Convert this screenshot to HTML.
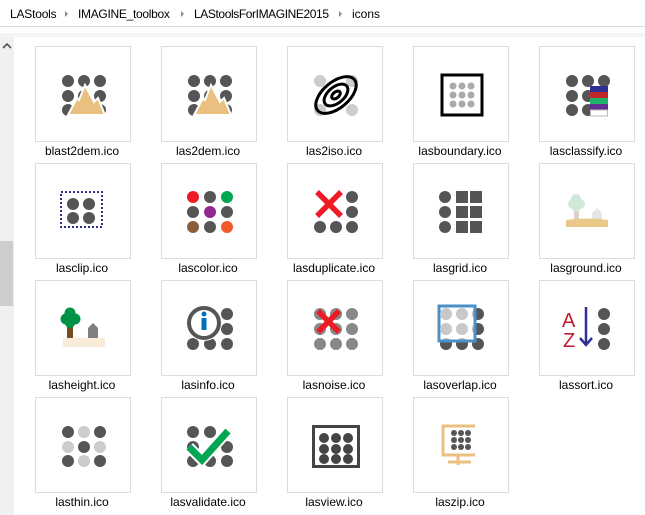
<!DOCTYPE html>
<html><head><meta charset="utf-8"><style>
body{margin:0;width:645px;height:515px;overflow:hidden;background:#fff;font-family:"Liberation Sans",sans-serif;position:relative}
.bc{position:absolute;left:0;top:0;width:645px;height:26px;border-bottom:1px solid #d9d9d9;font-size:12px;color:#000}
.bc span{position:absolute;top:7px;white-space:nowrap}
.bc i{position:absolute;top:11px;width:0;height:0;border-left:3px solid #888;border-top:3px solid transparent;border-bottom:3px solid transparent;z-index:2}
.strip{position:absolute;left:0;top:33px;width:645px;height:4px;background:#f4f4f4}
.sb{position:absolute;left:0;top:37px;width:14px;height:478px;background:#f0f0f0}
.thumb{position:absolute;left:0;top:204px;width:13px;height:65px;background:#cdcdcd}
.t{position:absolute;width:94px;height:94px;border:1px solid #dcdcdc}
.t svg{position:absolute;left:0;top:0}
.l{position:absolute;width:126px;text-align:center;font-size:12px;color:#000}
</style></head><body>
<div class="bc">
<span style="left:10px;letter-spacing:-0.2px">LAStools</span><i style="left:65px"></i>
<span style="left:78px;letter-spacing:-0.3px">IMAGINE_toolbox</span><i style="left:181px"></i>
<span style="left:194px;letter-spacing:-0.4px">LAStoolsForIMAGINE2015</span><i style="left:339px"></i>
<span style="left:352px">icons</span>
</div>
<div class="strip"></div>
<div class="sb"><svg width="14" height="14" style="position:absolute;top:3px;left:0"><path d="M3 8 L7 4 L11 8" stroke="#555" stroke-width="1.6" fill="none"/></svg><div class="thumb"></div></div>

<!-- Row 1 -->
<div class="t" style="left:35px;top:46px"><svg width="96" height="96">
<g fill="#555"><circle cx="32" cy="34" r="6"/><circle cx="48" cy="34" r="6"/><circle cx="64" cy="34" r="6"/><circle cx="32" cy="49" r="6"/><circle cx="48" cy="49" r="6"/><circle cx="64" cy="49" r="6"/><circle cx="32" cy="63" r="6"/><circle cx="48" cy="63" r="6"/><circle cx="64" cy="63" r="6"/></g>
<polygon points="32,68 41,51 43,53 49,38 58,55 62,51 69,68" fill="#e9c07f" stroke="#fff" stroke-width="2"/></svg></div>
<div class="l" style="left:19px;top:144px">blast2dem.ico</div>

<div class="t" style="left:161px;top:46px"><svg width="96" height="96">
<g fill="#555"><circle cx="32" cy="34" r="6"/><circle cx="48" cy="34" r="6"/><circle cx="64" cy="34" r="6"/><circle cx="32" cy="49" r="6"/><circle cx="48" cy="49" r="6"/><circle cx="64" cy="49" r="6"/><circle cx="32" cy="63" r="6"/><circle cx="48" cy="63" r="6"/><circle cx="64" cy="63" r="6"/></g>
<polygon points="32,68 41,51 43,53 49,38 58,55 62,51 69,68" fill="#e9c07f" stroke="#fff" stroke-width="2"/></svg></div>
<div class="l" style="left:145px;top:144px">las2dem.ico</div>

<div class="t" style="left:287px;top:46px"><svg width="96" height="96">
<g fill="#ccc"><circle cx="32" cy="34" r="6"/><circle cx="64" cy="34" r="6"/><circle cx="32" cy="63" r="6"/><circle cx="64" cy="63" r="6"/></g>
<g fill="none" stroke="#000" stroke-width="3" transform="rotate(-40 48 48)"><ellipse cx="48" cy="48" rx="24" ry="13"/><ellipse cx="48" cy="48" rx="14" ry="8"/><ellipse cx="48" cy="48" rx="5" ry="3"/></g></svg></div>
<div class="l" style="left:271px;top:144px">las2iso.ico</div>

<div class="t" style="left:413px;top:46px"><svg width="96" height="96">
<rect x="28" y="28" width="40" height="40" fill="none" stroke="#000" stroke-width="3"/>
<g fill="#aaa"><circle cx="39" cy="39" r="3.5"/><circle cx="48" cy="39" r="3.5"/><circle cx="57" cy="39" r="3.5"/><circle cx="39" cy="48" r="3.5"/><circle cx="48" cy="48" r="3.5"/><circle cx="57" cy="48" r="3.5"/><circle cx="39" cy="57" r="3.5"/><circle cx="48" cy="57" r="3.5"/><circle cx="57" cy="57" r="3.5"/></g></svg></div>
<div class="l" style="left:397px;top:144px">lasboundary.ico</div>

<div class="t" style="left:539px;top:46px"><svg width="96" height="96">
<g fill="#555"><circle cx="32" cy="34" r="6"/><circle cx="48" cy="34" r="6"/><circle cx="64" cy="34" r="6"/><circle cx="32" cy="49" r="6"/><circle cx="48" cy="49" r="6"/><circle cx="32" cy="63" r="6"/><circle cx="48" cy="63" r="6"/></g>
<rect x="50" y="39" width="18" height="6" fill="#2e3192"/><rect x="50" y="45" width="18" height="6" fill="#c1272d"/><rect x="50" y="51" width="18" height="6" fill="#21b36b"/><rect x="50" y="57" width="18" height="6" fill="#662d91"/><rect x="50.5" y="63" width="17" height="6" fill="#fff" stroke="#bbb"/></svg></div>
<div class="l" style="left:523px;top:144px">lasclassify.ico</div>

<!-- Row 2 -->
<div class="t" style="left:35px;top:163px"><svg width="96" height="96">
<rect x="25" y="28" width="41" height="35" fill="none" stroke="#2e3192" stroke-width="2" stroke-dasharray="2,2"/>
<g fill="#555"><circle cx="37" cy="40" r="6"/><circle cx="53" cy="40" r="6"/><circle cx="37" cy="54" r="6"/><circle cx="53" cy="54" r="6"/></g></svg></div>
<div class="l" style="left:19px;top:261px">lasclip.ico</div>

<div class="t" style="left:161px;top:163px"><svg width="96" height="96">
<circle cx="31" cy="33" r="6" fill="#ed1c24"/><circle cx="48" cy="33" r="6" fill="#555"/><circle cx="65" cy="33" r="6" fill="#00a651"/>
<circle cx="31" cy="48" r="6" fill="#555"/><circle cx="48" cy="48" r="6" fill="#92278f"/><circle cx="65" cy="48" r="6" fill="#555"/>
<circle cx="31" cy="63" r="6" fill="#8b5e3c"/><circle cx="48" cy="63" r="6" fill="#555"/><circle cx="65" cy="63" r="6" fill="#f15a29"/></svg></div>
<div class="l" style="left:145px;top:261px">lascolor.ico</div>

<div class="t" style="left:287px;top:163px"><svg width="96" height="96">
<g fill="#555"><circle cx="64" cy="33" r="6"/><circle cx="64" cy="48" r="6"/><circle cx="32" cy="63" r="6"/><circle cx="48" cy="63" r="6"/><circle cx="64" cy="63" r="6"/></g>
<path d="M29 28 L53 52 M53 28 L29 52" stroke="#ed1c24" stroke-width="5.5"/></svg></div>
<div class="l" style="left:271px;top:261px">lasduplicate.ico</div>

<div class="t" style="left:413px;top:163px"><svg width="96" height="96">
<g fill="#555"><circle cx="31" cy="33" r="6"/><circle cx="31" cy="48" r="6"/><circle cx="31" cy="63" r="6"/>
<rect x="42" y="27" width="12" height="12"/><rect x="56" y="27" width="12" height="12"/><rect x="42" y="42" width="12" height="12"/><rect x="56" y="42" width="12" height="12"/><rect x="42" y="57" width="12" height="12"/><rect x="56" y="57" width="12" height="12"/></g></svg></div>
<div class="l" style="left:397px;top:261px">lasgrid.ico</div>

<div class="t" style="left:539px;top:163px"><svg width="96" height="96">
<rect x="34" y="44" width="5" height="15" fill="#ddd2c8"/>
<g fill="#cfe8d8"><circle cx="33" cy="40" r="5"/><circle cx="40" cy="40" r="5"/><circle cx="36" cy="35" r="5"/><circle cx="36" cy="44" r="4"/></g>
<path d="M52 59 V49 L57 44 L62 49 V59Z" fill="#e6e6e6"/>
<path d="M26 56 Q48 53 68 56 V63 H26Z" fill="#eac88a"/></svg></div>
<div class="l" style="left:523px;top:261px">lasground.ico</div>

<!-- Row 3 -->
<div class="t" style="left:35px;top:280px"><svg width="96" height="96">
<rect x="31" y="43" width="6" height="16" fill="#754c24"/>
<g fill="#009245"><circle cx="30" cy="38" r="5.5"/><circle cx="39" cy="38" r="5.5"/><circle cx="34" cy="32" r="5.5"/><circle cx="34" cy="42" r="5"/></g>
<path d="M52 58 V47 L57 42 L62 47 V58Z" fill="#808080"/>
<rect x="27" y="57" width="42" height="9" fill="#f9ecd9"/></svg></div>
<div class="l" style="left:19px;top:378px">lasheight.ico</div>

<div class="t" style="left:161px;top:280px"><svg width="96" height="96">
<g fill="#555"><circle cx="65" cy="33" r="6"/><circle cx="65" cy="48" r="6"/><circle cx="31" cy="63" r="6"/><circle cx="48" cy="63" r="6"/><circle cx="65" cy="63" r="6"/></g>
<circle cx="42" cy="42" r="18" fill="#fff"/><circle cx="42" cy="42" r="15" fill="#fff" stroke="#555" stroke-width="4"/>
<circle cx="42" cy="33" r="2.5" fill="#0071bc"/><rect x="39.5" y="37" width="5" height="12" fill="#0071bc"/></svg></div>
<div class="l" style="left:145px;top:378px">lasinfo.ico</div>

<div class="t" style="left:287px;top:280px"><svg width="96" height="96">
<g fill="#888"><circle cx="32" cy="33" r="6"/><circle cx="48" cy="33" r="6"/><circle cx="64" cy="33" r="6"/><circle cx="32" cy="48" r="6"/><circle cx="48" cy="48" r="6"/><circle cx="64" cy="48" r="6"/><circle cx="32" cy="63" r="6"/><circle cx="48" cy="63" r="6"/><circle cx="64" cy="63" r="6"/></g>
<path d="M30 30 L51 51 M51 30 L30 51" stroke="#ed1c24" stroke-width="5.5"/></svg></div>
<div class="l" style="left:271px;top:378px">lasnoise.ico</div>

<div class="t" style="left:413px;top:280px"><svg width="96" height="96">
<g fill="#555"><circle cx="64" cy="33" r="6"/><circle cx="64" cy="48" r="6"/><circle cx="32" cy="63" r="6"/><circle cx="48" cy="63" r="6"/><circle cx="64" cy="63" r="6"/></g>
<rect x="25" y="25" width="36" height="35" fill="#fff" fill-opacity="0.6" stroke="#4a90c8" stroke-width="3"/>
<g fill="#c8c8c8"><circle cx="32" cy="33" r="6"/><circle cx="48" cy="33" r="6"/><circle cx="32" cy="48" r="6"/><circle cx="48" cy="48" r="6"/></g></svg></div>
<div class="l" style="left:397px;top:378px">lasoverlap.ico</div>

<div class="t" style="left:539px;top:280px"><svg width="96" height="96">
<g fill="#555"><circle cx="64" cy="33" r="6"/><circle cx="64" cy="48" r="6"/><circle cx="64" cy="63" r="6"/></g>
<text x="22" y="46" font-family="Liberation Sans" font-size="20" fill="#be1e2d">A</text>
<text x="23" y="66" font-family="Liberation Sans" font-size="20" fill="#be1e2d">Z</text>
<path d="M46 26 V64 M40 57 L46 64 L52 57" stroke="#2e3192" stroke-width="2.5" fill="none"/></svg></div>
<div class="l" style="left:523px;top:378px">lassort.ico</div>

<!-- Row 4 -->
<div class="t" style="left:35px;top:397px"><svg width="96" height="96">
<circle cx="32" cy="34" r="6" fill="#555"/><circle cx="48" cy="34" r="6" fill="#ccc"/><circle cx="64" cy="34" r="6" fill="#555"/>
<circle cx="32" cy="49" r="6" fill="#ccc"/><circle cx="48" cy="49" r="6" fill="#555"/><circle cx="64" cy="49" r="6" fill="#ccc"/>
<circle cx="32" cy="63" r="6" fill="#555"/><circle cx="48" cy="63" r="6" fill="#ccc"/><circle cx="64" cy="63" r="6" fill="#555"/></svg></div>
<div class="l" style="left:19px;top:495px">lasthin.ico</div>

<div class="t" style="left:161px;top:397px"><svg width="96" height="96">
<g fill="#555"><circle cx="31" cy="34" r="6"/><circle cx="48" cy="34" r="6"/><circle cx="31" cy="49" r="6"/><circle cx="65" cy="49" r="6"/><circle cx="31" cy="63" r="6"/><circle cx="48" cy="63" r="6"/><circle cx="65" cy="63" r="6"/></g>
<path d="M27 49 L40 62 L66 33" stroke="#fff" stroke-width="11" fill="none"/>
<path d="M27 49 L40 62 L66 33" stroke="#00a651" stroke-width="7" fill="none"/></svg></div>
<div class="l" style="left:145px;top:495px">lasvalidate.ico</div>

<div class="t" style="left:287px;top:397px"><svg width="96" height="96">
<rect x="25.5" y="28.5" width="45" height="40" fill="#fff" stroke="#444" stroke-width="3"/>
<rect x="24" y="27" width="48" height="3" fill="#444"/>
<g fill="#444"><circle cx="36" cy="40" r="5"/><circle cx="48" cy="40" r="5"/><circle cx="60" cy="40" r="5"/><circle cx="36" cy="51" r="5"/><circle cx="48" cy="51" r="5"/><circle cx="60" cy="51" r="5"/><circle cx="36" cy="61" r="5"/><circle cx="48" cy="61" r="5"/><circle cx="60" cy="61" r="5"/></g></svg></div>
<div class="l" style="left:271px;top:495px">lasview.ico</div>

<div class="t" style="left:413px;top:397px"><svg width="96" height="96">
<path d="M61 28 H29 V57 H61 M44 57 V67 M34 64 H57" stroke="#e9c07f" stroke-width="3" fill="none"/>
<g fill="#555"><circle cx="40" cy="35" r="3"/><circle cx="47" cy="35" r="3"/><circle cx="54" cy="35" r="3"/><circle cx="40" cy="42" r="3"/><circle cx="47" cy="42" r="3"/><circle cx="54" cy="42" r="3"/><circle cx="40" cy="49" r="3"/><circle cx="47" cy="49" r="3"/><circle cx="54" cy="49" r="3"/></g></svg></div>
<div class="l" style="left:397px;top:495px">laszip.ico</div>
</body></html>
